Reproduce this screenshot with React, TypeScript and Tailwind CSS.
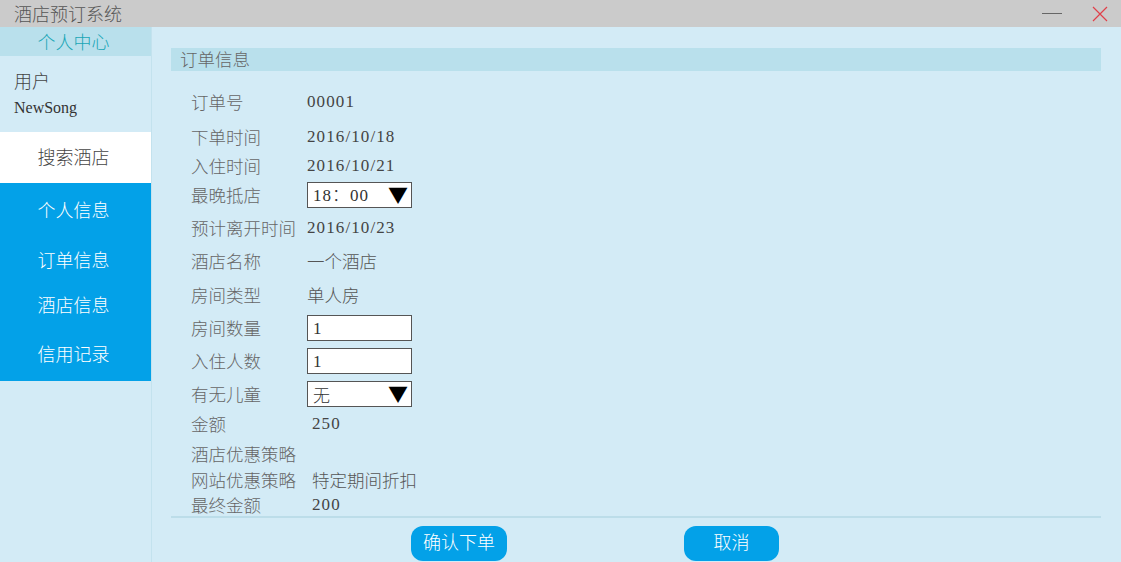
const cjk = "font-['Noto_Sans_CJK_SC','Noto_Sans',sans-serif]";
const serif = "font-['Liberation_Serif','Noto_Sans_CJK_SC',serif]";

type Row = { label: string; value?: string; kind?: "text" | "serif" | "input" | "select"; mt: string; pl?: string };

const rows: Row[] = [
  { label: "订单号", value: "00001", kind: "serif", mt: "mt-0" },
  { label: "下单时间", value: "2016/10/18", kind: "serif", mt: "mt-[9px]" },
  { label: "入住时间", value: "2016/10/21", kind: "serif", mt: "mt-[3px]" },
  { label: "最晚抵店", value: "18：00", kind: "select", mt: "mt-[3px]" },
  { label: "预计离开时间", value: "2016/10/23", kind: "serif", mt: "mt-[7px]" },
  { label: "酒店名称", value: "一个酒店", kind: "text", mt: "mt-[7px]" },
  { label: "房间类型", value: "单人房", kind: "text", mt: "mt-[8px]" },
  { label: "房间数量", value: "1", kind: "input", mt: "mt-[7px]" },
  { label: "入住人数", value: "1", kind: "input", mt: "mt-[7px]" },
  { label: "有无儿童", value: "无", kind: "select", mt: "mt-[7px]" },
  { label: "金额", value: "250", kind: "serif", mt: "mt-[4px]", pl: "pl-[5px]" },
  { label: "酒店优惠策略", mt: "mt-[4px]" },
  { label: "网站优惠策略", value: "特定期间折扣", kind: "text", mt: "mt-0", pl: "pl-[5px]" },
  { label: "最终金额", value: "200", kind: "serif", mt: "-mt-px", pl: "pl-[5px]" },
];

function Value({ row }: { row: Row }) {
  if (!row.value) return null;
  if (row.kind === "serif")
    return <span className={`${serif} ${row.pl ?? ""} text-[17px] tracking-[1.1px] text-[#444]`}>{row.value}</span>;
  if (row.kind === "text")
    return <span className={`${cjk} ${row.pl ?? ""} text-[17.5px] font-light text-[#555]`}>{row.value}</span>;
  return (
    <div className="flex h-[26px] w-[105px] items-center justify-between border border-[#555] bg-white pl-[5px] pr-[3px]">
      <span className={`${row.value === "无" ? cjk : serif} text-[17px] leading-none tracking-[1px] text-[#333]`}>{row.value}</span>
      {row.kind === "select" && <span className="text-[20px] leading-none text-black">▼</span>}
    </div>
  );
}

export default function App() {
  return (
    <div className={`${cjk} flex h-[562px] w-[1121px] flex-col overflow-hidden bg-[#d3ebf6] font-light`}>
      {/* title bar */}
      <div className="flex h-[27px] shrink-0 items-center justify-between bg-[#cbcbcb] pl-[14px] pr-[13px]">
        <span className="text-[18px] text-[#555]">酒店预订系统</span>
        <div className="flex items-center gap-[30px]">
          <div className="h-[1.5px] w-[20px] bg-[#666]" />
          <svg width="16" height="16" viewBox="0 0 16 16">
            <path d="M1 1L15 15M15 1L1 15" stroke="#e0404a" strokeWidth="1.2" />
          </svg>
        </div>
      </div>

      <div className="flex flex-1">
        {/* sidebar */}
        <aside className="flex w-[152px] shrink-0 flex-col border-r border-[#c3e2ee]">
          <div className="flex h-[29px] items-center justify-center bg-[#b9e0ec] pr-[4px] text-[18px] text-[#19a6b6]">
            个人中心
          </div>
          <div className="flex h-[76px] flex-col pl-[14px] pt-[12px]">
            <span className="text-[18px] leading-[24px] text-[#444]">用户</span>
            <span className={`${serif} mt-[6px] text-[16px] leading-[20px] text-[#333]`}>NewSong</span>
          </div>
          <div className="flex h-[51px] items-center justify-center bg-white pb-[3px] pr-[4px] text-[18px] text-[#444]">
            搜索酒店
          </div>
          <nav className="flex h-[198px] flex-col items-center bg-[#03a1e8] pr-[4px] text-[18px] text-white">
            <div className="mt-[14px] leading-[24px]">个人信息</div>
            <div className="mt-[26px] leading-[24px]">订单信息</div>
            <div className="mt-[21px] leading-[24px]">酒店信息</div>
            <div className="mt-[25px] leading-[24px]">信用记录</div>
          </nav>
        </aside>

        {/* main */}
        <main className="flex flex-1 flex-col pl-[19px] pr-[20px] pt-[21px]">
          <div className="flex h-[23px] items-center bg-[#b9e0ec] pl-[9px] text-[17.5px] text-[#666]">订单信息</div>
          <div className="mt-[18px] flex flex-col pl-[20px]">
            {rows.map((row) => (
              <div key={row.label} className={`flex h-[26px] items-center ${row.mt}`}>
                <span className="w-[116px] text-[17.5px] text-[#666]">{row.label}</span>
                <Value row={row} />
              </div>
            ))}
          </div>
          <div className="-mt-[2px] h-[2px] bg-[#bcdde9]" />
          <div className="mt-[8px] flex">
            <button className="ml-[240px] flex h-[35px] w-[96px] items-center justify-center rounded-[12px] bg-[#03a1e8] pb-[5px] text-[18px] text-white">
              确认下单
            </button>
            <button className="ml-[177px] flex h-[35px] w-[95px] items-center justify-center rounded-[12px] bg-[#03a1e8] pb-[5px] text-[18px] text-white">
              取消
            </button>
          </div>
        </main>
      </div>
    </div>
  );
}
